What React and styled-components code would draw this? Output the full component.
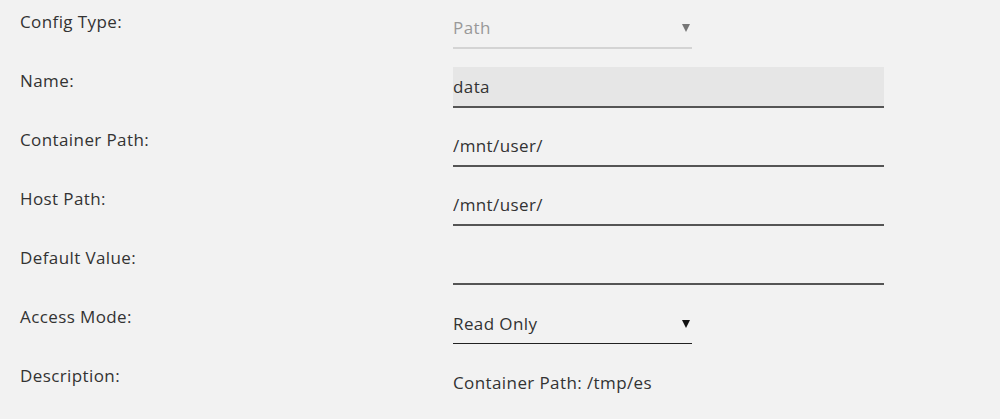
import React from "react";
import styled, { createGlobalStyle } from "styled-components";

const GlobalStyle = createGlobalStyle`
  html, body {
    margin: 0;
    padding: 0;
    background: #f2f2f2;
  }
  body {
    font-family: "Open Sans", "Noto Sans", sans-serif;
    color: #333;
  }
`;

const Form = styled.div`
  display: grid;
  grid-template-columns: 433px 431px;
  grid-auto-rows: 41px;
  row-gap: 18px;
  padding: 8px 0 0 20px;
  font-size: 17px;
  letter-spacing: 0.4px;
`;

const Label = styled.div`
  line-height: 27px;
  color: #333;
`;

const Select = styled.div`
  width: 239px;
  height: 41px;
  box-sizing: border-box;
  display: flex;
  align-items: center;
  justify-content: space-between;
  border-bottom: ${(p) => (p.disabled ? "2px solid #d4d4d4" : "1.5px solid #222")};
  color: ${(p) => (p.disabled ? "#999" : "#333")};
`;

// small filled triangle, like the native select caret
const Arrow = styled.span`
  width: 0;
  height: 0;
  margin: 1px 2px 0 0;
  border-left: 4px solid transparent;
  border-right: 4px solid transparent;
  border-top: 8px solid ${(p) => (p.disabled ? "#777" : "#111")};
`;

const TextInput = styled.input`
  display: block;
  width: 100%;
  height: 41px;
  box-sizing: border-box;
  margin: 0;
  padding: 0;
  border: none;
  border-bottom: 2px solid #555;
  outline: none;
  font: inherit;
  letter-spacing: inherit;
  color: #333;
  background: ${(p) => (p.$filled ? "#e6e6e6" : "transparent")};
`;

const Note = styled.div`
  line-height: 41px;
  color: #333;
`;

const rows = [
  { label: "Name:", value: "data", filled: true },
  { label: "Container Path:", value: "/mnt/user/" },
  { label: "Host Path:", value: "/mnt/user/" },
  { label: "Default Value:", value: "" },
];

export default function App() {
  return (
    <>
      <GlobalStyle />
      <Form>
        <Label>Config Type:</Label>
        <Select disabled>
          <span>Path</span>
          <Arrow disabled />
        </Select>

        {rows.map((r) => (
          <React.Fragment key={r.label}>
            <Label>{r.label}</Label>
            <TextInput readOnly defaultValue={r.value} $filled={r.filled} />
          </React.Fragment>
        ))}

        <Label>Access Mode:</Label>
        <Select>
          <span>Read Only</span>
          <Arrow />
        </Select>

        <Label>Description:</Label>
        <Note>Container Path: /tmp/es</Note>
      </Form>
    </>
  );
}
